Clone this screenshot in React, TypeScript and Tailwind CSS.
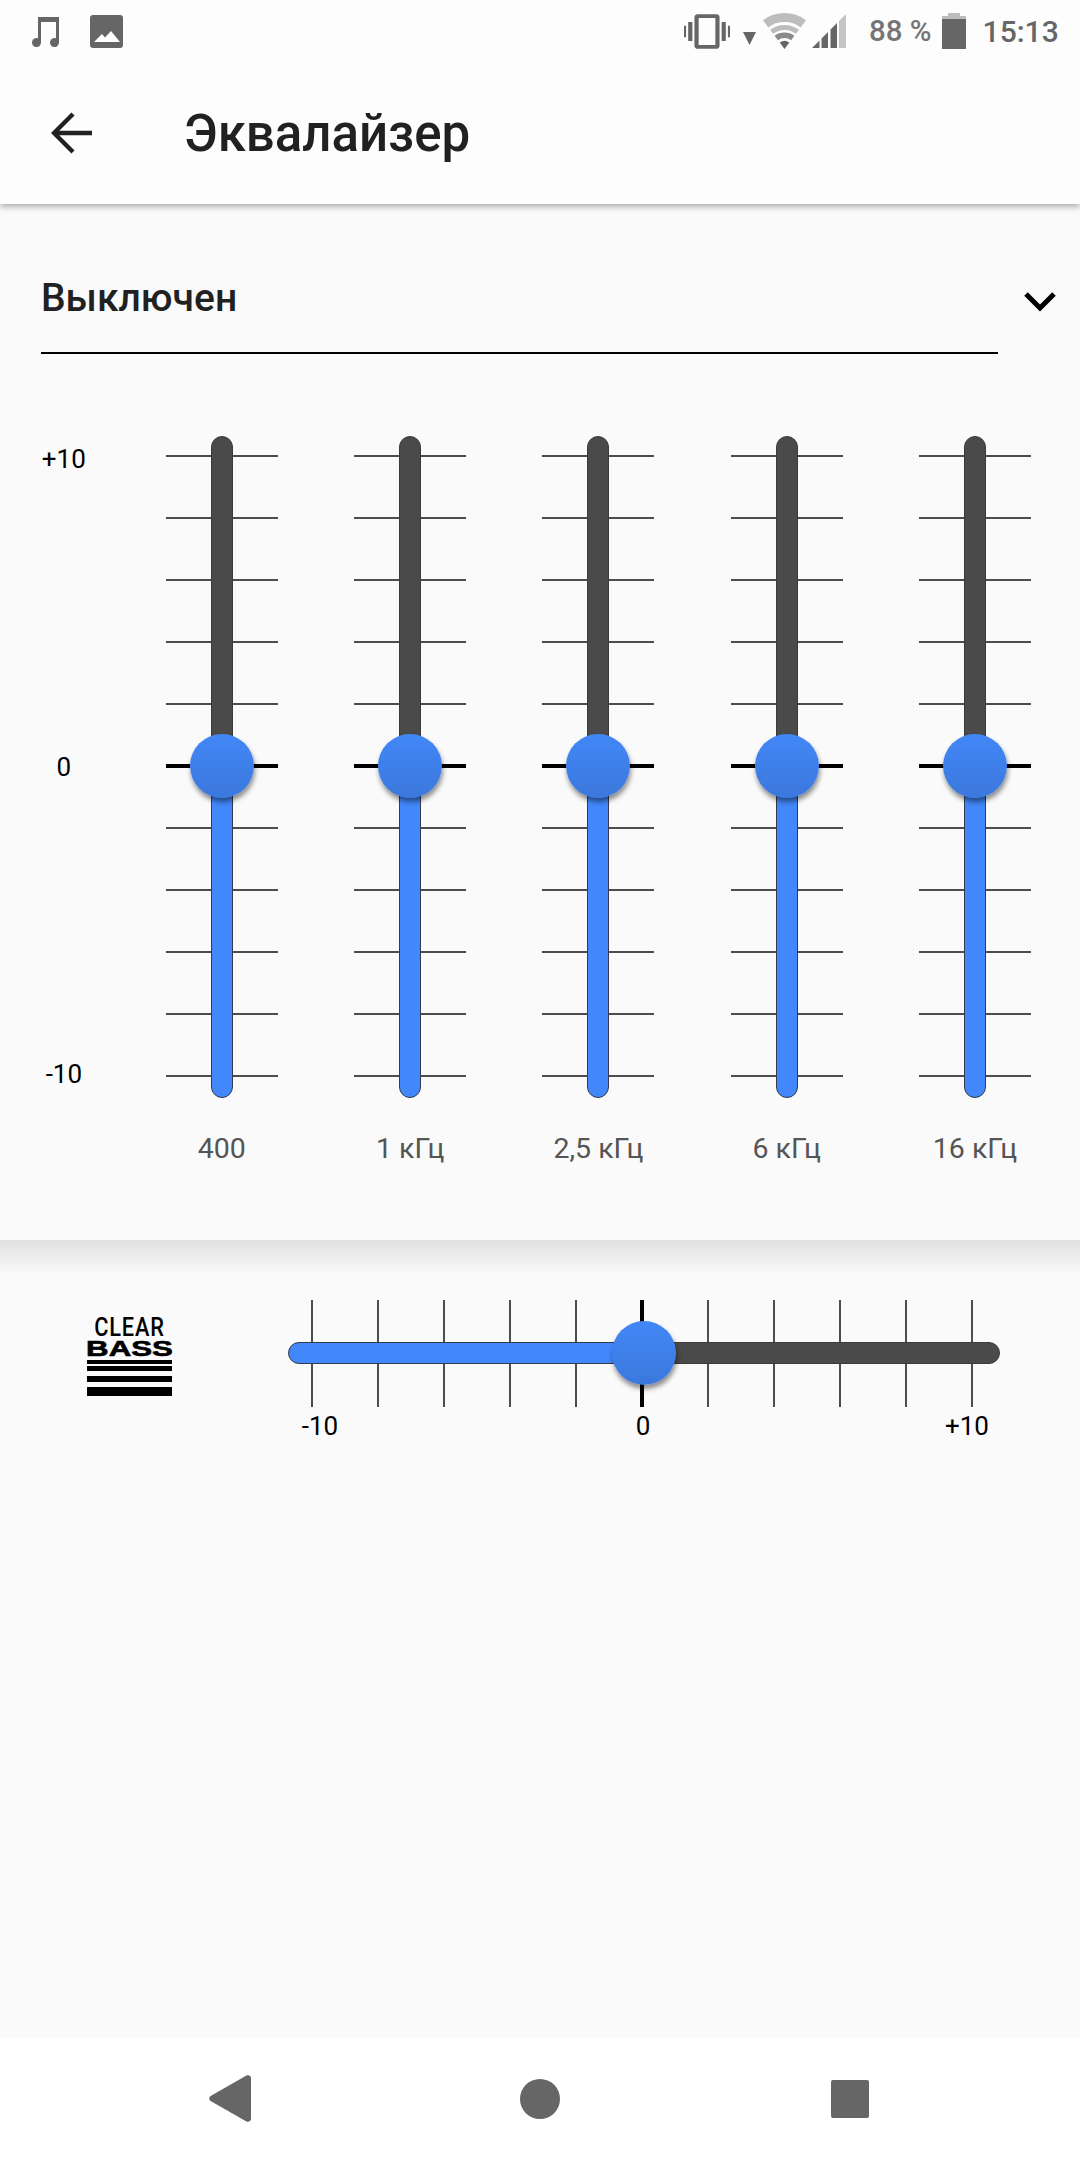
const bands = ['400', '1 кГц', '2,5 кГц', '6 кГц', '16 кГц'];
const ticks = [0, 1, 2, 3, 4, 5, 6, 7, 8, 9, 10];

const Thumb = () => (
  <div className="w-[64px] h-[64px] rounded-full bg-gradient-to-b from-[#4287f7] to-[#3b78dc] shadow-[1px_4px_5px_rgba(0,0,0,0.45)]" />
);

const StatusBar = () => (
  <div className="h-[66px] flex items-center text-[#666666]">
    <svg className="ml-[31px] w-[28px] h-[32px] mt-[-4px]" viewBox="0 0 28 32" fill="#666666">
      <path d="M7 2h21v25.5a4.5 4.5 0 1 1-3-4.2V7H10v20.500a4.500 4.500 0 1 1-3-4.200z" />
    </svg>
    <svg className="ml-[31px] w-[33px] h-[33px] mt-[-4px]" viewBox="0 0 33 33">
      <rect width="33" height="33" rx="3" fill="#666666" />
      <path d="M4 27l8-8 3 3.500 6-6.500 9 11z" fill="#ffffff" />
    </svg>
    <svg className="ml-[561px] w-[46px] h-[35px] mt-[-4px]" viewBox="1 2.9 22 18.2" fill="#666666" preserveAspectRatio="none">
      <path d="M0 15h2V9H0v6zm3 2h2V7H3v10zm19-8v6h2V9h-2zm-3 8h2V7h-2v10zM16.500 3h-9C6.670 3 6 3.670 6 4.500v15c0 .83.67 1.500 1.500 1.500h9c.83 0 1.500-.67 1.500-1.500v-15c0-.83-.67-1.500-1.500-1.500zM16 19H8V5h8v14z" />
    </svg>
    <svg className="ml-[13px] w-[13px] h-[13px] mt-[11px]" viewBox="0 0 13 13" fill="#666666">
      <path d="M0 0h13L6.500 13z" />
    </svg>
    <svg className="ml-[7px] w-[43px] h-[36px] mt-[-4px]" viewBox="0 -1 43 36">
      <path d="M0 6.200A36 36 0 0 1 43 6.200L37.700 13.400A27 27 0 0 0 5.300 13.400z" fill="#bdbdbd" />
      <path d="M7.100 15.800A24 24 0 0 1 35.900 15.800L32.900 19.800A19 19 0 0 0 10.100 19.800z" fill="#bdbdbd" />
      <path d="M11.600 21.800A16.500 16.500 0 0 1 31.400 21.800L28.100 26.200A11 11 0 0 0 14.900 26.200z" fill="#8a8a8a" />
      <path d="M16.700 28.600A8 8 0 0 1 26.300 28.600L21.500 35z" fill="#666666" />
    </svg>
    <svg className="ml-[6px] w-[34px] h-[34px] mt-[-4px]" viewBox="0 0 34 34">
      <path d="M27 7L34 0V34H27z" fill="#c4c4c4" />
      <path d="M0 34L7.500 26.500V34zM9.500 24.500L16 18V34H9.500zM18.500 15.500L25 9V34H18.500z" fill="#666666" />
    </svg>
    <span className="ml-[23px] font-['Roboto',sans-serif] font-medium text-[29.500px] leading-none text-[#757575] mt-[-3px]">88 %</span>
    <div className="ml-[10px] w-[24px] h-[36px] mt-[-4px] flex flex-col items-center">
      <div className="w-[12px] h-[3px] bg-[#bdbdbd]" />
      <div className="w-full h-[3px] bg-[#bdbdbd]" />
      <div className="w-full flex-1 bg-[#666666]" />
    </div>
    <span className="ml-[17px] font-['Roboto',sans-serif] font-medium text-[30px] leading-none text-[#666666] mt-[-3px]">15:13</span>
  </div>
);

const Toolbar = () => (
  <div className="h-[138px] flex items-start">
    <svg className="ml-[51px] mt-[46px] w-[41px] h-[42px]" viewBox="0 0 41 42" fill="none" stroke="#212121" strokeWidth="4.400">
      <path d="M41 21H4M22 2L3 21l19 19" />
    </svg>
    <h1 className="ml-[92px] mt-[39px] font-['Roboto',sans-serif] font-medium text-[51px] leading-[58px] text-[#212121]">Эквалайзер</h1>
  </div>
);

const BandSlider = ({ label }: { label: string }) => (
  <div className="w-[188.3px] flex flex-col items-center">
    <div className="relative w-[112px] h-[662px] flex flex-col justify-between pt-[19px] pb-[21px]">
      {ticks.map((t) => (
        <div key={t} className="h-[2px] flex items-center">
          {t === 5 ? <div className="w-full h-[4px] bg-black" /> : <div className="w-full h-[2px] bg-[#4d4d4d]" />}
        </div>
      ))}
      <div className="absolute left-[45px] top-0 w-[22px] h-[331px] rounded-t-[11px] bg-[#4a4a4a] border border-[#3a3a3a]" />
      <div className="absolute left-[45px] top-[330px] w-[22px] h-[332px] rounded-b-[11px] bg-[#4287fb] border border-[#333a4a]" />
      <div className="absolute left-[24px] top-[298px]">
        <Thumb />
      </div>
    </div>
    <div className="mt-[36px] font-['Roboto',sans-serif] text-[28.500px] leading-[30px] text-[#555555] whitespace-nowrap">{label}</div>
  </div>
);

const ClearBass = () => (
  <div className="ml-[87px] mt-[42px] w-[85px] flex flex-col">
    <div className="h-[24px] flex items-center justify-center font-['Roboto',sans-serif] font-medium text-[25px] leading-[24px] text-black tracking-[1px] scale-x-[0.87]">CLEAR</div>
    <div className="h-[18px] flex items-center justify-center font-['Liberation_Sans',sans-serif] font-bold text-[22px] leading-[18px] text-black scale-x-[1.42] [-webkit-text-stroke:0.6px_black]">BASS</div>
    <div className="h-[4px] mt-[2px] bg-black" />
    <div className="h-[5px] mt-[2px] bg-black" />
    <div className="h-[6px] mt-[5px] bg-black" />
    <div className="h-[9px] mt-[5px] bg-black" />
  </div>
);

export default function App() {
  const hTicks = [0, 1, 2, 3, 4, 5, 6, 7, 8, 9, 10];
  return (
    <div className="w-[1080px] h-[2160px] flex flex-col bg-[#fafafa] overflow-hidden font-['Roboto',sans-serif]">
      <div className="relative z-10 bg-[#fdfdfd] shadow-[0_3px_6px_rgba(0,0,0,0.3)]">
        <StatusBar />
        <Toolbar />
      </div>

      <div className="h-[1036px] flex flex-col">
        <div className="mt-[68px] ml-[41px] flex items-start">
          <div className="w-[957px] h-[82px] pt-[1px] border-b-2 border-black">
            <span className="font-medium text-[39px] leading-[50px] text-[#212121]">Выключен</span>
          </div>
          <svg className="ml-[26px] mt-[20px] w-[32px] h-[20px]" viewBox="0 0 32 20" fill="none" stroke="black" strokeWidth="5">
            <path d="M2 2l14 14L30 2" />
          </svg>
        </div>
        <div className="mt-[82px] flex">
          <div className="w-[127.700px] h-[662px] flex flex-col items-center justify-between pt-[8px] pb-[9px] text-[26px] leading-[30px] text-black">
            <span>+10</span>
            <span>0</span>
            <span>-10</span>
          </div>
          {bands.map((b) => (
            <BandSlider key={b} label={b} />
          ))}
        </div>
      </div>

      <div className="h-[34px] bg-gradient-to-b from-[#e0e0e0] to-[#fafafa]" />

      <div className="flex-1 flex">
        <ClearBass />
        <div className="ml-[116px] mt-[26px] w-[712px] flex flex-col">
          <div className="relative h-[107px]">
            <div className="pl-[23px] pr-[27px] h-full flex justify-between items-stretch w-[712px]">
              {hTicks.map((t) => (
                <div key={t} className="w-[2px] flex justify-center">
                  {t === 5 ? <div className="w-[4px] h-full bg-black shrink-0" /> : <div className="w-[2px] h-full bg-[#4d4d4d]" />}
                </div>
              ))}
            </div>
            <div className="absolute left-0 top-[42px] w-[356px] h-[22px] rounded-l-[11px] bg-[#4287fb] border border-[#333a4a]" />
            <div className="absolute left-[355px] top-[42px] w-[357px] h-[22px] rounded-r-[11px] bg-[#4a4a4a] border border-[#3a3a3a]" />
            <div className="absolute left-[324px] top-[21px]">
              <Thumb />
            </div>
          </div>
          <div className="mt-[4px] h-[30px] flex text-[26px] leading-[30px] text-black">
            <span className="ml-[12px] w-[40px] text-center">-10</span>
            <span className="ml-[295px] w-[16px] text-center">0</span>
            <span className="ml-[293px] w-[46px] text-center">+10</span>
          </div>
        </div>
      </div>

      <div className="h-[122px] bg-white flex items-center">
        <svg className="ml-[209px] w-[42px] h-[47px] mt-[-2px]" viewBox="0 0 42 47" fill="#666666">
          <path d="M37 .8 1.600 21a3 3 0 0 0 0 5L37 46.200c2.200 1.200 5 .2 5-2.500V3.300c0-2.700-2.800-3.700-5-2.500z" />
        </svg>
        <div className="ml-[269px] w-[40px] h-[40px] rounded-full bg-[#666666]" />
        <div className="ml-[271px] w-[38px] h-[38px] rounded-[2px] bg-[#666666]" />
      </div>
    </div>
  );
}
